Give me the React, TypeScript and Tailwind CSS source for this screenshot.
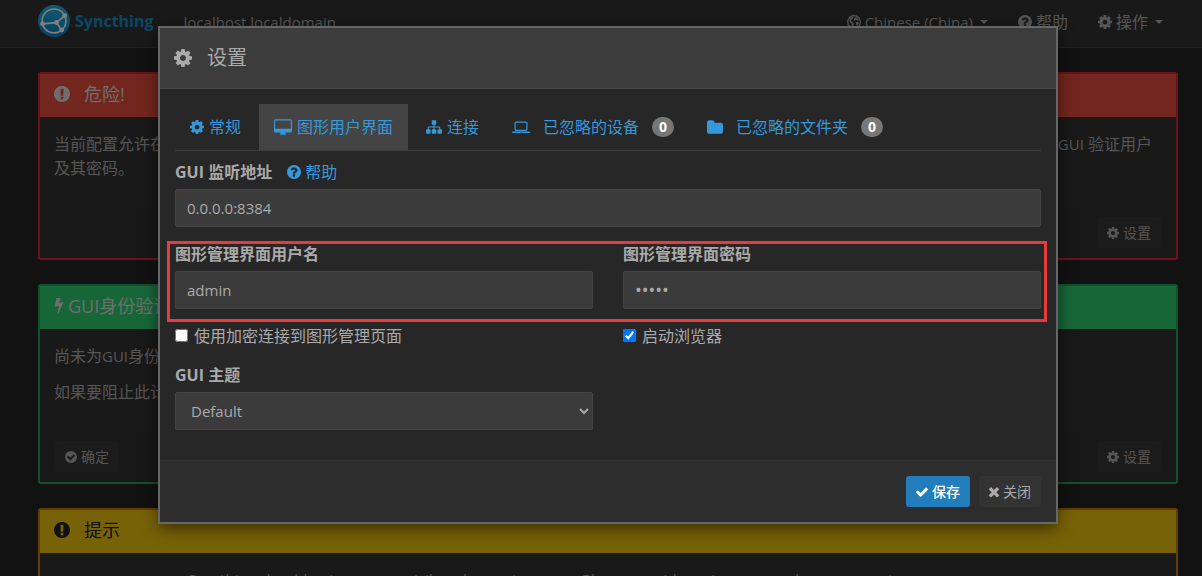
import React, { ReactNode } from "react";

const icons = {
  cog: ["128 128 1536 1536", "M1152 896q0-106-75-181t-181-75-181 75-75 181 75 181 181 75 181-75 75-181zm512-109v222q0 12-8 23t-20 13l-185 28q-19 54-39 91 35 50 107 138 10 12 10 25t-9 23q-27 37-99 108t-94 71q-12 0-26-9l-138-108q-44 23-91 38-16 136-29 186-7 28-36 28h-222q-14 0-24.5-8.5t-11.5-21.5l-28-184q-49-16-90-37l-141 107q-10 9-25 9-14 0-25-11-126-114-165-168-7-10-7-23 0-12 8-23 15-21 51-66.5t54-70.5q-27-50-41-99l-183-27q-13-2-21-12.5t-8-23.5v-222q0-12 8-23t19-13l186-28q14-46 39-92-40-57-107-138-10-12-10-24 0-10 9-23 26-36 98.5-107.5t94.5-71.5q13 0 26 10l138 107q44-23 91-38 16-136 29-186 7-28 36-28h222q14 0 24.5 8.5t11.5 21.5l28 184q49 16 90 37l142-107q9-9 24-9 13 0 25 10 129 119 165 170 7 8 7 22 0 12-8 23-15 21-51 66.5t-54 70.5q26 50 41 98l183 28q13 2 21 12.5t8 23.5z"],
  check: ["121 300 1550 1200", "M1671 566q0 40-28 68l-724 724-136 136q-28 28-68 28t-68-28l-136-136-362-362q-28-28-28-68t28-68l136-136q28-28 68-28t68 28l294 295 656-657q28-28 68-28t68 28l136 136q28 28 28 68z"],
  times: ["302 328 1188 1188", "M1490 1322q0 40-28 68l-136 136q-28 28-68 28t-68-28l-294-294-294 294q-28 28-68 28t-68-28l-136-136q-28-28-28-68t28-68l294-294-294-294q-28-28-28-68t28-68l136-136q28-28 68-28t68 28l294 294 294-294q28-28 68-28t68 28l136 136q28 28 28 68t-28 68l-294 294 294 294q28 28 28 68z"],
  question: ["128 128 1536 1536", "M1024 1376v-192q0-14-9-23t-23-9h-192q-14 0-23 9t-9 23v192q0 14 9 23t23 9h192q14 0 23-9t9-23zm256-672q0-88-55.5-163t-138.5-116-170-41q-243 0-371 213-15 24 8 42l132 100q7 6 19 6 16 0 25-12 53-68 86-92 34-24 86-24 48 0 85.5 26t37.5 59q0 38-20 61t-68 45q-63 28-115.5 86.5t-52.5 125.5v36q0 14 9 23t23 9h192q14 0 23-9t9-23q0-19 21.5-49.5t54.5-49.5q32-18 49-28.5t46-35 44.5-48 28-60.5 12.5-81zm384 192q0 209-103 385.5t-279.5 279.5-385.5 103-385.5-103-279.5-279.5-103-385.5 103-385.5 279.5-279.5 385.5-103 385.5 103 279.5 279.5 103 385.5z"],
  exclamation: ["128 128 1536 1536", "M896 128q209 0 385.5 103t279.5 279.5 103 385.5-103 385.5-279.5 279.5-385.5 103-385.5-103-279.5-279.5-103-385.5 103-385.5 279.5-279.5 385.5-103zm128 1247v-190q0-14-9-23.5t-22-9.5h-192q-13 0-23 10t-10 23v190q0 13 10 23t23 10h192q13 0 22-9.5t9-23.5zm-2-344l18-621q0-12-10-18-10-8-24-8h-220q-14 0-24 8-10 6-10 18l17 621q0 10 10 17.5t24 7.5h185q14 0 23.5-7.5t10.5-17.5z"],
  checkCircle: ["128 128 1536 1536", "M1412 734q0-28-18-46l-91-90q-19-19-45-19t-45 19l-408 407-226-226q-19-19-45-19t-45 19l-91 90q-18 18-18 46 0 27 18 45l362 362q19 19 45 19 27 0 46-19l543-543q18-18 18-45zm252 162q0 209-103 385.5t-279.5 279.5-385.5 103-385.5-103-279.5-279.5-103-385.5 103-385.5 279.5-279.5 385.5-103 385.5 103 279.5 279.5 103 385.5z"],
  bolt: ["0 128 896 1664", "M885 566q18 20 7 44l-540 1157q-13 25-42 25-4 0-14-2-17-5-25.5-19t-4.5-30l197-808-406 101q-4 1-12 1-18 0-31-11-18-15-13-39l201-825q4-14 16-23t28-9h328q19 0 32 12.5t13 29.5q0 8-5 18l-171 463 396-98q8-2 12-2 19 0 34 15z"],
  desktop: ["-64 0 1920 1664", "M1728 992v-832q0-13-9.5-22.5t-22.5-9.5h-1600q-13 0-22.5 9.5t-9.5 22.5v832q0 13 9.5 22.5t22.5 9.5h1600q13 0 22.5-9.5t9.5-22.5zm128-832v1088q0 66-47 113t-113 47h-544q0 37 16 77.5t32 71 16 43.500q0 26-19 45t-45 19h-512q-26 0-45-19t-19-45q0-14 16-44t32-70 16-78h-544q-66 0-113-47t-47-113v-1088q0-66 47-113t113-47h1600q66 0 113 47t47 113z"],
  laptop: ["0 200 1920 1300", "M416 1280q-66 0-113-47t-47-113v-704q0-66 47-113t113-47h1088q66 0 113 47t47 113v704q0 66-47 113t-113 47h-1088zm-32-864v704q0 13 9.500 22.500t22.500 9.500h1088q13 0 22.500-9.500t9.500-22.500v-704q0-13-9.500-22.500t-22.500-9.500h-1088q-13 0-22.500 9.500t-9.500 22.500zm1376 928h160v96q0 40-47 68t-113 28h-1600q-66 0-113-28t-47-68v-96h1760zm-720 96q16 0 16-16t-16-16h-160q-16 0-16 16t16 16h160z"],
  sitemap: ["0 128 1792 1536", "M1792 1248v320q0 40-28 68t-68 28h-320q-40 0-68-28t-28-68v-320q0-40 28-68t68-28h96v-192h-512v192h96q40 0 68 28t28 68v320q0 40-28 68t-68 28h-320q-40 0-68-28t-28-68v-320q0-40 28-68t68-28h96v-192h-512v192h96q40 0 68 28t28 68v320q0 40-28 68t-68 28h-320q-40 0-68-28t-28-68v-320q0-40 28-68t68-28h96v-192q0-52 38-90t90-38h512v-192h-96q-40 0-68-28t-28-68v-320q0-40 28-68t68-28h320q40 0 68 28t28 68v320q0 40-28 68t-68 28h-96v192h512q52 0 90 38t38 90v192h96q40 0 68 28t28 68z"],
  folder: ["64 128 1664 1408", "M1728 608v704q0 92-66 158t-158 66h-1216q-92 0-158-66t-66-158v-960q0-92 66-158t158-66h320q92 0 158 66t66 158v32h672q92 0 158 66t66 158z"],
};

function Icon({ name, className }: { name: keyof typeof icons; className: string }) {
  return (
    <svg viewBox={icons[name][0]} className={`shrink-0 ${className}`} fill="currentColor" aria-hidden="true">
      <path d={icons[name][1]} />
    </svg>
  );
}

function Globe() {
  return (
    <svg viewBox="0 0 16 16" className="size-[14px] shrink-0" aria-hidden="true">
      <circle cx="8" cy="8" r="7.200" fill="none" stroke="currentColor" strokeWidth="1.5" />
      <path fill="currentColor" d="M3 5 5 2.500 7.500 2 6.500 4 5 5.500 4.500 7 7 8.500 8 10.500 6.500 13.500 5.500 12 5 9.500 3 8ZM9 2.500 12 3.500 13.500 6 12 6.500 10.500 5 8.500 7 8 5ZM10 8 13 8 13.500 9.500 11.500 12.500 10.500 11Z" />
    </svg>
  );
}

function Logo() {
  return (
    <svg viewBox="0 0 117.3 117.3" className="size-8" aria-hidden="true">
      <defs>
        <linearGradient id="logo" x1="0" y1="1" x2="0" y2="0">
          <stop offset="0" stopColor="#0882c8" />
          <stop offset="1" stopColor="#26b6db" />
        </linearGradient>
      </defs>
      <circle cx="58.700" cy="58.500" r="58.700" fill="url(#logo)" />
      <g fill="none" stroke="#fff" strokeWidth="6">
        <circle cx="58.700" cy="58.500" r="43.700" />
        <path d="M97.500 39.400 67.500 64.400 86.500 91.800M67.500 64.400 16.600 69.100" />
      </g>
      <g fill="#fff">
        <circle cx="97.600" cy="39.300" r="9" />
        <circle cx="86.600" cy="91.800" r="9" />
        <circle cx="67.500" cy="64.400" r="9" />
        <circle cx="16.600" cy="69.100" r="9" />
      </g>
    </svg>
  );
}

const Caret = () => <span className="ml-[3px] border-x-4 border-t-4 border-x-transparent border-t-current" />;

const En = ({ children }: { children: ReactNode }) => <span className="text-[15px]">{children}</span>;

function PageButton({ icon, children }: { icon: keyof typeof icons; children: ReactNode }) {
  return (
    <button className="flex h-[31px] items-center gap-1 rounded-[3px] bg-[#363636] px-[10px] text-sm">
      <Icon name={icon} className="size-3" />
      {children}
    </button>
  );
}

const heading = "flex h-[43px] items-center px-[14px] pb-[3px] text-lg";

function Page() {
  return (
    <div className="text-[#aaa]">
      <nav className="flex h-12 items-center border-b border-[#444] bg-[#333] pr-[39px] pb-[3px] pl-[38px]">
        <a href="#" className="flex items-center gap-[5px] pb-[3px] font-bold text-[#148fc8]">
          <Logo />
          Syncthing
        </a>
        <span className="ml-[30px] text-[15px]">localhost.localdomain</span>
        <div className="ml-auto flex items-center gap-[30px]">
          <a href="#language" className="flex items-center gap-1">
            <Globe />
            <En>Chinese (China)</En>
            <Caret />
          </a>
          <a href="#help" className="flex items-center gap-1">
            <Icon name="question" className="size-[14px]" />
            帮助
          </a>
          <a href="#actions" className="flex items-center gap-1">
            <Icon name="cog" className="size-[14px]" />
            操作
            <Caret />
          </a>
        </div>
      </nav>
      <main className="flex flex-col gap-6 pt-6 pr-6 pl-[38px]">
        <section className="rounded-[3px] border-2 border-[#d8253f] bg-[#333]">
          <h3 className={`${heading} gap-[14px] bg-[#e74c3c] text-[#ddd]`}>
            <Icon name="exclamation" className="size-4" />
            危险!
          </h3>
          <div className="flex justify-between px-[14px] pt-[15px] pb-[27px]">
            <p>
              当前配置允许在
              <br />
              及其密码。
            </p>
            <p className="pr-[10px]">
              <En>GUI</En> 验证用户
            </p>
          </div>
          <div className="flex justify-end bg-[#303030] px-[15px] py-[10px]">
            <PageButton icon="cog">设置</PageButton>
          </div>
        </section>
        <section className="rounded-[3px] border-2 border-[#28a05a] bg-[#333]">
          <h3 className={`${heading} gap-1 bg-[#2ecc71] text-[#ddd]`}>
            <Icon name="bolt" className="h-4 w-[10px]" />
            GUI身份验证
          </h3>
          <div className="flex flex-col gap-3 px-[14px] pt-[15px] pb-[27px]">
            <p>
              尚未为<En>GUI</En>身份
            </p>
            <p>如果要阻止此计</p>
          </div>
          <div className="flex justify-between bg-[#303030] px-[15px] py-[10px]">
            <PageButton icon="checkCircle">确定</PageButton>
            <PageButton icon="cog">设置</PageButton>
          </div>
        </section>
        <section className="rounded-[3px] border-2 border-[#c87814] bg-[#333]">
          <h3 className={`${heading} gap-[14px] bg-[#f1c40f] text-[#222]`}>
            <Icon name="exclamation" className="size-4" />
            提示
          </h3>
          <p className="py-[14px] pl-[148px] text-[15px]">
            Syncthing should not run as a privileged or system user. Please consider using a normal user account.
          </p>
        </section>
      </main>
    </div>
  );
}

function Tab({ icon, iconClass, active, wide, count, children }: {
  icon: keyof typeof icons;
  iconClass: string;
  active?: boolean;
  wide?: boolean;
  count?: number;
  children: ReactNode;
}) {
  return (
    <a
      href="#tab"
      className={`flex h-[46px] items-center px-[15px] ${wide ? "gap-[13px]" : "gap-[5px]"} ${active ? "bg-[#444]" : ""}`}
    >
      <Icon name={icon} className={iconClass} />
      {children}
      {count !== undefined && (
        <span className="flex h-5 w-[22px] items-center justify-center rounded-full bg-[#777] text-sm font-bold text-white">
          {count}
        </span>
      )}
    </a>
  );
}

const field = "h-[38px] w-full rounded-[2px] border border-[#444] bg-[#3b3b3b] px-[11px] text-[#aaa]";
const label = "mb-[6px] block leading-[22px] font-bold";

function SettingsDialog() {
  return (
    <div role="dialog" aria-labelledby="title" className="w-full max-w-[900px] border-2 border-[#666] bg-[#272727] text-[#aaa] shadow-[0_5px_15px_rgba(0,0,0,0.5)]">
      <header className="flex h-[61px] items-center gap-[15px] border-b border-[#4a4a4a] bg-[#3c3c3c] px-[14px]">
        <Icon name="cog" className="size-[18px]" />
        <h2 id="title" className="text-xl">设置</h2>
      </header>
      <div className="px-[15px] pt-[15px] pb-[30px]">
        <nav className="flex gap-[3px] border-b border-[#3c3c3c] text-[#3498db]">
          <Tab icon="cog" iconClass="size-[14px]">常规</Tab>
          <Tab icon="desktop" iconClass="h-4 w-[18px]" active>图形用户界面</Tab>
          <Tab icon="sitemap" iconClass="h-[14px] w-4">连接</Tab>
          <Tab icon="laptop" iconClass="h-3 w-[18px]" wide count={0}>已忽略的设备</Tab>
          <Tab icon="folder" iconClass="h-[14px] w-4" wide count={0}>已忽略的文件夹</Tab>
        </nav>
        <form className="flex flex-col gap-4 pt-[10px]">
          <div>
            <div className="flex gap-[15px]">
              <label htmlFor="address" className={label}>GUI 监听地址</label>
              <a href="#help" className="mb-[6px] flex items-center gap-1 leading-[22px] text-[#3498db]">
                <Icon name="question" className="size-[14px]" />
                帮助
              </a>
            </div>
            <input id="address" className={`${field} text-[15px]`} defaultValue="0.0.0.0:8384" />
          </div>
          <div className="relative grid grid-cols-2 gap-[30px]">
            <div>
              <label htmlFor="user" className={label}>图形管理界面用户名</label>
              <input id="user" className={`${field} text-[15px]`} defaultValue="admin" />
            </div>
            <div>
              <label htmlFor="password" className={label}>图形管理界面密码</label>
              <input id="password" type="password" className={`${field} text-lg`} defaultValue="admin" />
            </div>
            <div className="pointer-events-none absolute -top-[2px] -right-[6px] -bottom-[13px] -left-2 border-3 border-[#e83c3c]" />
          </div>
          <div className="grid grid-cols-2 gap-[30px] leading-[23px]">
            <label className="flex items-center gap-[6px]">
              <input type="checkbox" className="mb-[3px] size-[13px]" />
              使用加密连接到图形管理页面
            </label>
            <label className="flex items-center gap-[6px]">
              <input type="checkbox" className="mb-[3px] size-[13px]" defaultChecked />
              启动浏览器
            </label>
          </div>
          <div className="grid grid-cols-2 gap-[30px]">
            <div>
              <label htmlFor="theme" className={label}>GUI 主题</label>
              <select id="theme" className={`${field} text-[15px]`}>
                <option>Default</option>
              </select>
            </div>
          </div>
        </form>
      </div>
      <footer className="flex justify-end gap-[9px] border-t border-[#333] bg-[#2d2d2d] px-[15px] py-[15px]">
        <button className="flex h-[31px] items-center gap-1 rounded-[3px] bg-[#217dbb] px-[10px] text-sm font-medium text-white">
          <Icon name="check" className="h-[10px] w-3" />
          保存
        </button>
        <button className="flex h-[31px] items-center gap-1 rounded-[3px] bg-[#333] px-[10px] text-sm">
          <Icon name="times" className="size-[10px]" />
          关闭
        </button>
      </footer>
    </div>
  );
}

export default function App() {
  return (
    <div className="relative h-screen overflow-hidden bg-[#242424] font-['Open_Sans','Noto_Sans_CJK_SC',sans-serif] text-base leading-6">
      <Page />
      <div className="absolute inset-0 flex items-start justify-center bg-black/50 pt-[26px] pl-[14px]">
        <SettingsDialog />
      </div>
    </div>
  );
}
